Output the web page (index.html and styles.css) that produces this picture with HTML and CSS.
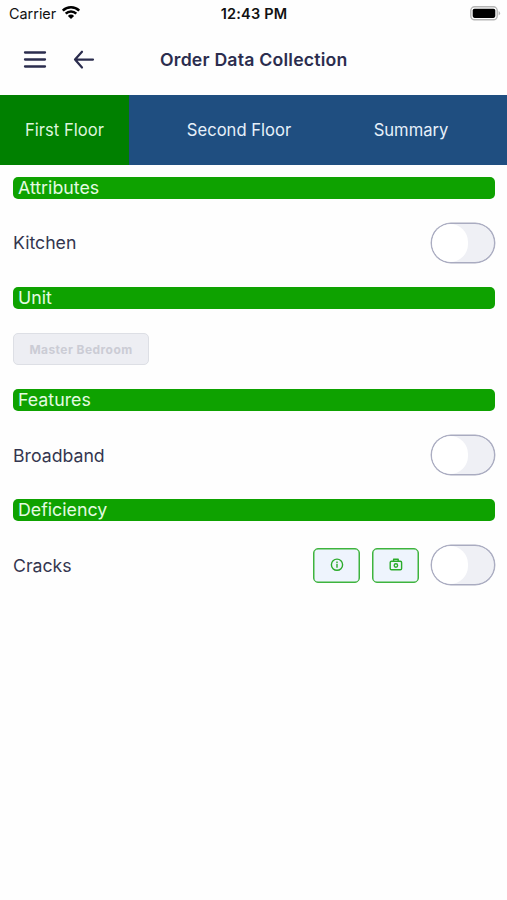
FILE: index.html
```html
<!DOCTYPE html>
<html lang="en">
<head>
<meta charset="utf-8">
<meta name="viewport" content="width=device-width, initial-scale=1">
<title>Order Data Collection</title>
<link rel="stylesheet" href="styles.css">
</head>
<body>
<div class="status">
  <div class="carrier"><span>Carrier</span>
    <svg class="wifi" width="20" height="15" viewBox="0 0 20 15" fill="none" stroke="#000" stroke-width="2.5"><path d="M1.8 5.6a11.6 11.6 0 0 1 16.4 0M4.7 8.7a7.5 7.5 0 0 1 10.6 0"/><path d="M10 14 6.9 10.9a4.4 4.4 0 0 1 6.2 0Z" fill="#000" stroke="none"/></svg>
  </div>
  <span class="clock">12:43 PM</span>
  <svg class="battery" width="31" height="15" viewBox="0 0 31 15"><rect x=".8" y=".8" width="26.4" height="13" rx="3.8" fill="#fff" stroke="#b5b5b5" stroke-width="1.4"/><rect x="2.7" y="2.7" width="22.6" height="9.2" rx="1.8"/><path d="M28.6 5v4.6q1.5-.8 1.5-2.3T28.6 5Z" fill="#b5b5b5"/></svg>
</div>
<header class="header">
  <svg class="menu" width="24" height="18" viewBox="0 0 24 18" fill="none" stroke="#2b2d4e" stroke-width="2.3" stroke-linecap="round"><path d="M2 1.5h20M2 8.5h20M2 15.5h20"/></svg>
  <svg class="back" width="22" height="20" viewBox="0 0 22 20" fill="none" stroke="#2b2d4e" stroke-width="2.2" stroke-linecap="round" stroke-linejoin="round"><path d="M9 1.7 2 9.6l7 7.9M2 9.6h18"/></svg>
  <h1 class="title">Order Data Collection</h1>
</header>
<nav class="tabs">
  <div class="tab active"><span>First Floor</span></div>
  <div class="tab"><span>Second Floor</span></div>
  <div class="tab summary"><span>Summary</span></div>
</nav>
<main class="content">
  <h2 class="section">Attributes</h2>
  <div class="row"><span class="label">Kitchen</span><span class="toggle"></span></div>
  <h2 class="section">Unit</h2>
  <div class="row unit-row"><button class="unit" disabled>Master Bedroom</button></div>
  <h2 class="section">Features</h2>
  <div class="row"><span class="label">Broadband</span><span class="toggle"></span></div>
  <h2 class="section">Deficiency</h2>
  <div class="row"><span class="label">Cracks</span>
    <div class="actions">
      <span class="action"><svg width="15" height="14" viewBox="0 0 15 14" fill="none" stroke="#2bab2b" stroke-width="1.4"><circle cx="8" cy="6.7" r="5.6"/><path d="M8 5.8v4M8 3.4v1.5"/></svg></span>
      <span class="action"><svg width="15" height="14" viewBox="0 0 15 14" fill="none" stroke="#2bab2b" stroke-width="1.4" stroke-linejoin="round"><rect x="2.2" y="3.2" width="11.4" height="8.6" rx="1.3"/><path d="M5.6 3V1.3h4.6V3"/><circle cx="7.9" cy="7.5" r="1.7"/></svg></span>
      <span class="toggle"></span>
    </div>
  </div>
</main>
</body>
</html>
```
FILE: styles.css
```css
* { box-sizing: border-box; }
body {
  margin: 0;
  height: 900px;
  overflow: hidden;
  background: #fefefe;
  color: #34364f;
  font-family: Inter, "Liberation Sans", sans-serif;
}
svg { display: block; flex: none; }
h1, h2 { margin: 0; font-weight: 400; }
.status {
  display: grid;
  grid-template-columns: 1fr auto 1fr;
  align-items: center;
  height: 27px;
  padding: 0 6px 0 7px;
  color: #111;
}
.carrier { display: flex; align-items: center; gap: 5px; padding-left: 2px; font-size: 14.4px; }
.wifi { margin-top: -2px; }
.clock { font-size: 14.5px; font-weight: 600; letter-spacing: .2px; }
.battery { justify-self: end; }
.header { display: flex; align-items: center; height: 68px; padding: 0 0 3px 23px; }
.back { margin-left: 26px; }
.title { margin-left: 65px; font-size: 17.7px; font-weight: 600; letter-spacing: .2px; color: #2b2d4e; white-space: nowrap; }
.tabs {
  display: grid;
  grid-template-columns: 129px 220px 1fr;
  height: 69.5px;
  background: #1f4e80;
  color: #e6f0fa;
  font-size: 16.6px;
}
.tab { display: flex; align-items: center; justify-content: center; white-space: nowrap; }
.active { background: #008000; color: #dcf5dc; }
.summary { padding-right: 34px; }
.content { padding: 12.3px 12.5px 0 13px; }
.section {
  height: 22px;
  padding-left: 5px;
  border-radius: 5px;
  background: #0ea200;
  color: #e4fbe2;
  font-size: 17.8px;
  line-height: 22px;
}
.row { display: flex; align-items: center; justify-content: space-between; height: 88px; }
.unit-row { height: 80.5px; }
.label { font-size: 17.7px; }
.toggle {
  width: 64px;
  height: 40px;
  border: 1px solid #a9abc0;
  border-radius: 20px;
  background: #eff0f5;
  box-shadow: 0 0 0 .4px #a9abc0;
  overflow: hidden;
}
.toggle::before {
  content: "";
  display: block;
  width: 36px;
  height: 38px;
  border-radius: 18px;
  background: #fff;
}
.actions { display: flex; align-items: center; gap: 12px; }
.action {
  display: grid;
  place-items: center;
  width: 47px;
  height: 35px;
  border: 1px solid #3eb43e;
  border-radius: 5px;
  background: #eef4fd;
  box-shadow: inset 0 0 0 .5px #3eb43e;
}
.unit {
  width: 136px;
  height: 32px;
  padding: 0;
  border: 1px solid #dddfe5;
  border-radius: 5px;
  background: #edeef3;
  color: #cbccd5;
  font: 700 12px Inter, "Liberation Sans", sans-serif;
  letter-spacing: .45px;
}
```
